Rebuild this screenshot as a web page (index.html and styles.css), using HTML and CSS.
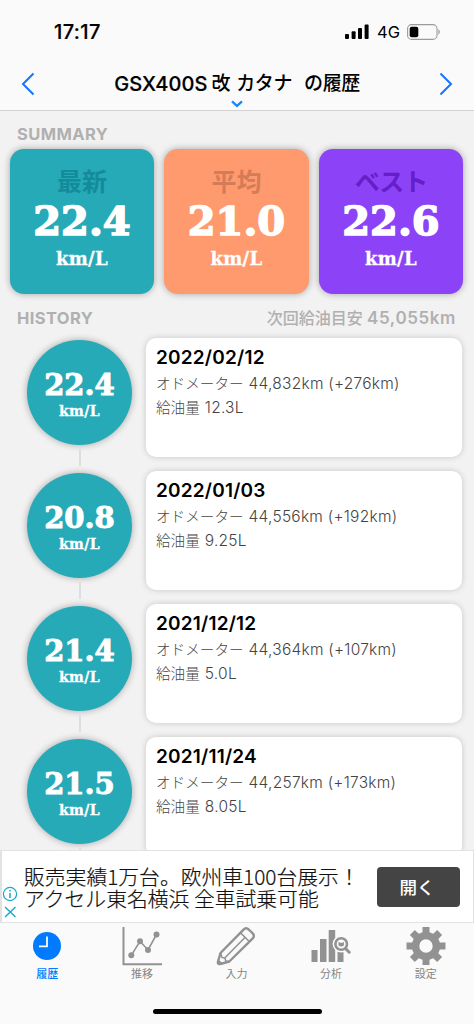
FILE: index.html
```html
<!DOCTYPE html>
<html lang="ja">
<head>
<meta charset="utf-8">
<title>履歴</title>
<link rel="stylesheet" href="styles.css">
</head>
<body>
<div class="app">
  <header class="header">
    <div class="status">
      <span class="clock">17:17</span>
      <div class="status-right">
        <svg class="signal" width="24" height="16" viewBox="0 0 24 16"><rect x="0" y="10" width="4" height="5" rx="1"/><rect x="6.6" y="7.3" width="4" height="7.7" rx="1"/><rect x="13" y="4" width="4" height="11" rx="1"/><rect x="19.6" y="0.5" width="4" height="14.5" rx="1"/></svg>
        <span class="network">4G</span>
        <svg class="battery" width="34" height="16" viewBox="0 0 34 16"><rect x=".6" y=".6" width="29.4" height="14.8" rx="4" fill="none" stroke="#9b9b9b" stroke-width="1.1"/><rect x="2.7" y="2.7" width="8.6" height="10.6" rx="2"/><path d="M31.4 5.3c1.8.8 1.8 4.6 0 5.4z" fill="#9b9b9b"/></svg>
      </div>
    </div>
    <div class="nav">
      <svg width="14" height="24" viewBox="0 0 14 24"><path d="M12.5 1.5L2 12l10.500 10.500" class="chevron"/></svg>
      <h1 class="title"><span>GSX400S</span><span class="title-a">改</span><span class="title-b">カタナ</span><span class="title-c">の履歴</span></h1>
      <svg width="14" height="24" viewBox="0 0 14 24"><path d="M1.500 1.500L12 12L1.500 22.500" class="chevron"/></svg>
    </div>
    <svg class="drop" width="12" height="8" viewBox="0 0 12 8"><path d="M1 1.300l5 4.600 5-4.600" fill="none" stroke="#1688ff" stroke-width="2.300"/></svg>
  </header>

  <main class="main">
    <h2 class="label summary-label">SUMMARY</h2>
    <section class="summary">
      <div class="tile teal"><b class="tile-name">最新</b><span class="big">22.4</span><span class="unit">km/L</span></div>
      <div class="tile orange"><b class="tile-name">平均</b><span class="big">21.0</span><span class="unit">km/L</span></div>
      <div class="tile purple"><b class="tile-name">ベスト</b><span class="big">22.6</span><span class="unit">km/L</span></div>
    </section>
    <div class="history-head"><h2 class="label">HISTORY</h2><span class="next">次回給油目安 <span class="next-km">45,055km</span></span></div>
    <section class="history">
      <article class="entry">
        <div class="rail"><div class="disc"><span class="rate">22.4</span><span class="rate-unit">km/L</span></div><i class="link"></i></div>
        <div class="card"><h3>2022/02/12</h3><p><span class="kana">オドメーター</span><span>44,832km (+276km)</span></p><p><span class="kanji">給油量</span><span>12.3L</span></p></div>
      </article>
      <article class="entry">
        <div class="rail"><div class="disc"><span class="rate">20.8</span><span class="rate-unit">km/L</span></div><i class="link"></i></div>
        <div class="card"><h3>2022/01/03</h3><p><span class="kana">オドメーター</span><span>44,556km (+192km)</span></p><p><span class="kanji">給油量</span><span>9.25L</span></p></div>
      </article>
      <article class="entry">
        <div class="rail"><div class="disc"><span class="rate">21.4</span><span class="rate-unit">km/L</span></div><i class="link"></i></div>
        <div class="card"><h3>2021/12/12</h3><p><span class="kana">オドメーター</span><span>44,364km (+107km)</span></p><p><span class="kanji">給油量</span><span>5.0L</span></p></div>
      </article>
      <article class="entry">
        <div class="rail"><div class="disc"><span class="rate">21.5</span><span class="rate-unit">km/L</span></div><i class="link"></i></div>
        <div class="card"><h3>2021/11/24</h3><p><span class="kana">オドメーター</span><span>44,257km (+173km)</span></p><p><span class="kanji">給油量</span><span>8.05L</span></p></div>
      </article>
    </section>
  </main>

  <aside class="ad">
    <div class="ad-marks">
      <svg width="16" height="16" viewBox="0 0 16 16" fill="none" stroke="#18a8c8"><circle cx="8" cy="8" r="6.600" stroke-width="1.200"/><path d="M8 7v5M8 4v1.500" stroke-width="1.500"/></svg>
      <svg width="16" height="16" viewBox="0 0 16 16"><path d="M3 3l10.500 10M13.500 3L3 13" stroke="#18a8c8" stroke-width="1.400"/></svg>
    </div>
    <p class="ad-text"><span class="ad-one">販売実績1万台。欧州車100台展示！</span><span class="ad-two">アクセル東名横浜 全車試乗可能</span></p>
    <button class="open">開く</button>
  </aside>

  <nav class="tabs">
    <a class="tab active"><svg width="40" height="40" viewBox="0 0 40 40"><circle cx="20" cy="20" r="14" fill="#007aff"/><path d="M20 10.500V20.300H12" fill="none" stroke="#fafafa" stroke-width="1.800"/></svg><span>履歴</span></a>
    <a class="tab"><svg width="40" height="40" viewBox="0 0 40 40" fill="none" stroke="#929292"><path d="M1.500 1v37.300H40" stroke-width="2"/><path d="M9.300 29.300L18 15.300l8 8.700 8.500-15.500" stroke-width="1.600"/><g fill="#929292" stroke="none"><circle cx="9.300" cy="29.300" r="3"/><circle cx="18" cy="15.300" r="3"/><circle cx="26" cy="24" r="3"/><circle cx="34.500" cy="8.500" r="3"/></g></svg><span>推移</span></a>
    <a class="tab"><svg width="40" height="40" viewBox="0 0 40 40" fill="none" stroke="#929292" stroke-width="2.400" stroke-linejoin="round"><path d="M4.500 27L27.300 3.800Q30 1 32.700 3.500L36.500 7.200Q39.200 10 36.500 12.700L13.300 35.500 4.300 38Q1.300 38.700 2 35.500z"/><path d="M4.500 27l1.500 4.500 3 .5.700 3 3.600.5M24.500 6.700l9 9M9 31.800L29.200 11.200" stroke-width="1.500"/><path d="M2 33l4.500 4.200-4 1.100Q1.200 38.300 1.500 36z" fill="#929292" stroke="none"/></svg><span>入力</span></a>
    <a class="tab"><svg width="40" height="40" viewBox="0 0 40 40"><g fill="#929292"><path d="M.5 24h6v12h-6zM9 13h6.500v23H9zM17.700 4h6.500v32h-6.500zM26.500 25h6v11h-6z"/></g><circle cx="30.200" cy="18" r="8.600" fill="#fafafa"/><path d="M34.500 22.500l3.700 3.700" stroke="#929292" stroke-width="3" stroke-linecap="round"/><circle cx="30.200" cy="18" r="5.800" fill="#fafafa" stroke="#929292" stroke-width="2.600"/><path d="M27.500 16l2.700 1 2.700-1v3.500q-2.700 2-5.400 0z" fill="#929292"/></svg><span>分析</span></a>
    <a class="tab"><svg width="40" height="40" viewBox="0 0 40 40"><path fill="#929292" fill-rule="evenodd" d="M16.500 1h7v5.300l3.700 1.500 4-3.700 4.900 4.900-3.800 4 1.600 3.500H39.500v7h-5.600l-1.600 3.700 3.800 3.900-4.900 5-4-3.800-3.700 1.500V39h-7v-5.200l-3.700-1.500-4 3.800-4.900-5 3.800-3.900-1.600-3.700H.5v-7h5.600L7.700 13l-3.800-4 4.900-4.900 4 3.700 3.700-1.500zM20 13.300a6.700 6.700 0 1 0 0 13.400 6.700 6.700 0 0 0 0-13.400z"/></svg><span>設定</span></a>
  </nav>
  <div class="home"><i></i></div>
</div>
</body>
</html>
```
FILE: styles.css
```css
* { box-sizing: border-box; }
body { margin: 0; background: #fafafa; font-family: Inter, "Noto Sans CJK JP", sans-serif; }
h1, h2, h3, p { margin: 0; }
svg { display: block; flex: none; }

.app { width: 474px; height: 1024px; display: flex; flex-direction: column; overflow: hidden; }

.header { flex: none; height: 111px; border-bottom: 1px solid #d2d2d2; background: #fafafa; display: flex; flex-direction: column; align-items: center; }
.status { width: 100%; height: 63px; padding: 0 33px 0 54px; display: flex; align-items: center; justify-content: space-between; }
.clock { font-size: 20px; font-weight: 500; letter-spacing: 0.4px; -webkit-text-stroke: 0.2px #000; }
.status-right { display: flex; align-items: center; }
.network { font-size: 16.500px; margin-left: 8px; width: 30px; }
.nav { width: 100%; height: 38px; padding: 3px 21px 0; display: flex; align-items: center; justify-content: space-between; }
.chevron { fill: none; stroke: #1473ff; stroke-width: 2; }
.title { display: flex; align-items: center; font-size: 20px; font-weight: 500; -webkit-text-stroke: 0.2px #000; line-height: 30px; padding-top: 1px; white-space: nowrap; letter-spacing: 0.1px; }
.title span:not(:first-child) { font-size: 19px; font-weight: 500; letter-spacing: -0.4px; -webkit-text-stroke: 0; }
.title-a { margin-left: 4px; }
.title-b { margin-left: 6px; }
.title-c { margin-left: 12px; }
.drop { margin-top: -1px; }

.main { flex: none; height: 739px; background: #f2f2f2; overflow: hidden; }
.label { font-size: 16.500px; line-height: 20px; font-weight: 700; color: #b0b0b0; letter-spacing: 0.4px; }
.summary-label { padding: 13px 0 5px 17px; }
.summary { display: grid; grid-template-columns: repeat(3, 144.500px); gap: 10px; padding-left: 9.700px; }
.tile { height: 145px; border-radius: 14px; box-shadow: 0 0 7px rgba(0,0,0,.32); display: flex; flex-direction: column; align-items: center; color: #fff; }
.tile-name { margin-top: 13px; height: 36px; line-height: 36px; font-size: 25px; font-family: "Noto Sans CJK JP", sans-serif; font-weight: 700; }
.teal { background: #27aab8; }
.teal .tile-name { color: #138b99; }
.orange { background: #ff9a6e; }
.orange .tile-name { color: #d47c58; }
.purple { background: #8c43f7; }
.purple .tile-name { color: #641fc8; letter-spacing: -1px; }
.big, .unit, .rate, .rate-unit { font-family: "DejaVu Serif", serif; font-weight: 700; color: #fff; -webkit-text-stroke: 1px #fff; }
.big { font-size: 40px; line-height: 46px; -webkit-text-stroke: 1.500px #fff; stroke-linejoin: round; }
.unit { font-size: 18px; line-height: 24px; margin-top: 3px; letter-spacing: 0.3px; -webkit-text-stroke: 0.3px #fff; }
.history-head { display: flex; justify-content: space-between; align-items: center; height: 43px; padding: 3px 18px 0 17px; }
.history-head { height: 44px; }
.next { color: #b0b0b0; font-size: 16px; font-weight: 500; line-height: 24px; white-space: nowrap; }
.next-km { font-size: 17px; font-weight: 600; letter-spacing: 0.6px; }

.history { display: grid; grid-auto-rows: 133px; }
.entry { display: grid; grid-template-columns: 119px 316px; padding-left: 27px; }
.rail { width: 105px; display: flex; flex-direction: column; align-items: center; padding-top: 2px; }
.disc { flex: none; width: 105px; height: 105px; border-radius: 50%; background: #27aab8; box-shadow: 0 0 7px rgba(0,0,0,.32); display: flex; flex-direction: column; align-items: center; }
.rate { margin-top: 28px; font-size: 29px; line-height: 34px; }
.rate-unit { font-size: 14px; line-height: 18px; letter-spacing: 0.4px; -webkit-text-stroke: 0.3px #fff; }
.link { width: 2px; height: 17px; margin-top: 4px; background: #dedede; }
.card { height: 119px; background: #fff; border-radius: 10px; box-shadow: 0 0 6px rgba(0,0,0,.18); padding: 7px 10px; }
.card h3 { font-size: 19px; line-height: 26px; font-weight: 600; color: #000; letter-spacing: 0.2px; }
.card p { display: flex; align-items: center; gap: 5px; height: 24px; font-size: 15.500px; line-height: 24px; font-weight: 300; color: #444; white-space: nowrap; letter-spacing: 0.25px; padding-top: 1px; }
.kana, .kanji { font-family: "Noto Sans CJK JP", sans-serif; font-size: 14.600px; font-weight: 300; letter-spacing: 0; margin-top: -2px; }

.ad { flex: none; height: 73px; background: #fff; border: 1px solid #e2e2e2; border-left-width: 2px; display: flex; align-items: center; }
.ad-marks { width: 22px; padding-top: 32px; display: grid; gap: 2px; }
.ad-text { width: 353px; font: 300 20.800px/22px "Noto Sans CJK JP", sans-serif; color: #111; white-space: nowrap; -webkit-text-stroke: 0.2px #111; }
.ad-text span { display: block; }
.open { width: 83px; height: 40px; border: 0; border-radius: 4px; background: #444; color: #fff; font: 500 17.500px/24px "Noto Sans CJK JP", sans-serif; padding: 0 3px 0 0; }

.tabs { flex: none; height: 70px; display: grid; grid-template-columns: repeat(5, 94.600px); background: #fafafa; padding-top: 3px; }
.tab { display: flex; flex-direction: column; align-items: center; font: 400 11px/14px "Noto Sans CJK JP", sans-serif; color: #858585; }
.active { color: #007aff; font-weight: 500; }
.home { height: 31px; display: flex; justify-content: center; padding-top: 16px; }
.home i { width: 169px; height: 5px; border-radius: 3px; background: #000; }
```
